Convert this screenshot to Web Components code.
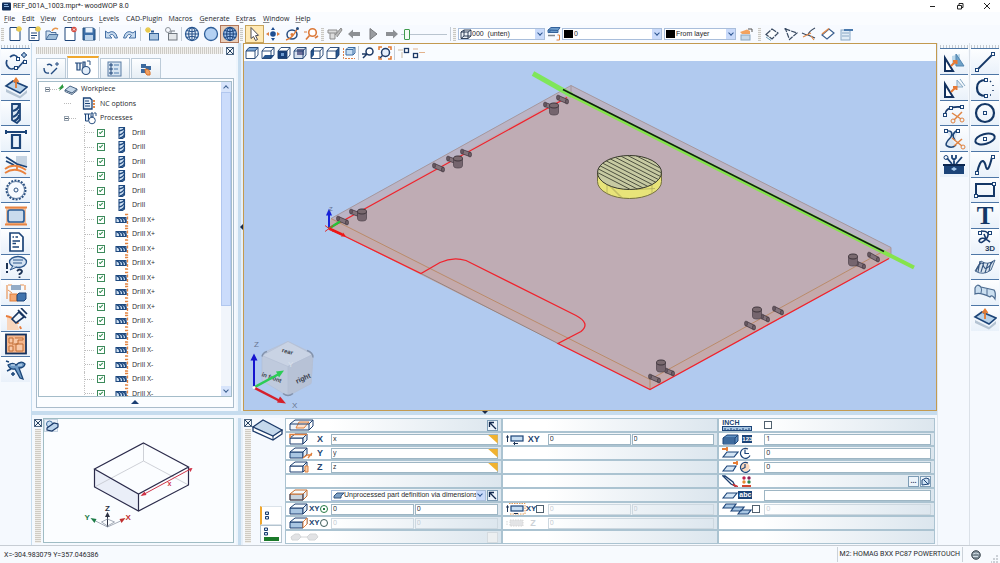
<!DOCTYPE html>
<html lang="en">
<head>
<meta charset="utf-8">
<title>REF_001A_1003.mpr*- woodWOP 8.0</title>
<style>
  html, body { margin: 0; height: 100%; }
  body { font: 7px/12px "Open Sans", "Noto Sans", sans-serif; color: #26282c; background: #f5f9fe; overflow: hidden; }
</style>
</head>
<body>
<wop-app></wop-app>

<script>
const BOX = (top, rest = '') => `<path d="M1 5L4 1.500H13V9L10 12.500H1Z" fill="${top}"/>${rest}<path d="M1 5L4 1.500H13V9L10 12.500H1ZM1 5H10L13 1.500M10 5V12.500" stroke="#1c3f70" stroke-width=".9"/>`;
const SLAB = (fill, stroke) => `<path d="M1 5H14V11H1Z" fill="${fill}" stroke="${stroke}"/><path d="M1 5L6 1H18L14 5Z" fill="#f6fafd" stroke="${stroke}"/><path d="M14 5L18 1V7L14 11Z" fill="#e4edf5" stroke="${stroke}"/>`;
const SHEET = `<path d="M3 1.500H10L13 4.500V14.500H3Z" fill="#fff" stroke="#1c4478"/><path d="M10 1.500V4.500H13" fill="none" stroke="#1c4478"/>`;
const SUN = (x, y) => `<path d="M${x - 3} ${y}H${x + 3}M${x} ${y - 3}V${y + 3}M${x - 2} ${y - 2}L${x + 2} ${y + 2}M${x + 2} ${y - 2}L${x - 2} ${y + 2}" stroke="#e8c94c" stroke-width="1.300"/>`;
const GLOBE = (fill, line) => `<circle cx="8" cy="8" r="6.500" fill="${fill}" stroke="#2f5f9a" stroke-width="1.300"/>${line ? `<path d="M8 1.500V14.500M1.500 8H14.500M2.500 4.500Q8 7 13.500 4.500M2.500 11.500Q8 9 13.500 11.500" stroke="${line}" fill="none"/><ellipse cx="8" cy="8" rx="3.300" ry="6.500" fill="none" stroke="${line}"/>` : ''}`;
const END = (x, y) => `<rect x="${x - 1.500}" y="${y - 1.500}" width="3" height="3" fill="#fff" stroke="#1c4478"/>`;

/* name: [width, height, drawing] */
const ICONS = {
  app: [10, 9, '<rect width="9" height="8" rx="1" y=".5" fill="#12305c"/><path d="M2 2.500H6M2 4.500H7" stroke="#8fb4dd"/>'],
  newDoc: [16, 16, SHEET + SUN(12, 3)],
  newText: [16, 16, SHEET + '<path d="M5 7H11M5 9.500H11M5 12H9" stroke="#1c4478"/>' + SUN(12, 3)],
  open: [16, 16, '<path d="M2 13.500V5H6L7 6.500H12V13.500Z" fill="#cfe0f0" stroke="#4a6f9c"/><path d="M2 13.500L5 8.500H14L12 13.500Z" fill="#9dbcd9" stroke="#4a6f9c"/><path d="M8 5Q10 1 14 3" stroke="#e89850" stroke-width="1.500" fill="none"/>'],
  delDoc: [16, 16, SHEET + '<circle cx="12" cy="3.500" r="2.700" fill="#d6473c"/><path d="M11 2.500L13 4.500M13 2.500L11 4.500" stroke="#fff"/>'],
  save: [16, 16, '<path d="M2 2H12.500L14 3.500V14H2Z" fill="#3c6ea8" stroke="#24507f"/><rect x="4.500" y="2" width="7" height="4.500" fill="#e8f1fa"/><rect x="4" y="9" width="8" height="5" fill="#bcd3ea"/>'],
  undo: [16, 16, '<path d="M2.500 5V12H9L6.500 9.500Q10 6.500 12 12H14.500Q12 2.500 5 7Z" fill="#c5d9ee" stroke="#4570a5"/>'],
  redo: [16, 16, '<path d="M13.500 5V12H7L9.500 9.500Q6 6.500 4 12H1.500Q4 2.500 11 7Z" fill="#c5d9ee" stroke="#4570a5"/>'],
  openNew: [16, 16, '<rect x="5.500" y="7.500" width="9" height="6.500" fill="#a9c6e2" stroke="#2f5f95"/><path d="M7 5.500H10" stroke="#2f5f95" stroke-width="2"/>' + SUN(4, 4)],
  saveGrey: [16, 16, '<rect x="5.500" y="7.500" width="8.500" height="6.500" fill="#e3e6e9" stroke="#70777f"/><path d="M8 7V5H12" stroke="#70777f" fill="none"/><circle cx="5" cy="4" r="2.500" fill="none" stroke="#8c9299"/>'],
  wire: [16, 16, GLOBE('#e6f0fa', '#244f88')],
  solid: [16, 16, GLOBE('#b4d1f3', '')],
  both: [16, 16, GLOBE('#9dc1ec', '#173f78')],
  cursor: [16, 16, '<path d="M5 1.500V12.500L7.500 10.500L9.500 14.500L11.500 13.500L9.500 9.700L12.500 9.300Z" fill="#fff" stroke="#4b4a52"/>'],
  move: [16, 16, '<circle cx="8" cy="8" r="2.800" fill="#1f4f93"/><path d="M8 1L10 4H6ZM8 15L6 12H10Z" fill="#1f4f93"/><path d="M1 8L4 6V10ZM15 8L12 10V6Z" fill="#e08040"/>'],
  orbit: [16, 16, '<ellipse cx="8" cy="8.500" rx="5" ry="4.500" fill="none" stroke="#274d80" stroke-width="1.500"/><path d="M2 14Q9 12 13 3" stroke="#e07b36" stroke-width="1.500" fill="none"/><circle cx="8" cy="8.500" r="1.500" fill="#e07b36"/><circle cx="13.500" cy="2.500" r="1.500" fill="#274d80"/>'],
  zoomO: [16, 16, '<circle cx="9.500" cy="6.500" r="3.800" fill="#fff" stroke="#dc7a3a" stroke-width="1.600"/><path d="M6.500 9.500L3 13.500M12 12L15 10" stroke="#dc7a3a" stroke-width="1.700"/><path d="M1 6H4" stroke="#dc7a3a"/>'],
  mill: [16, 16, '<path d="M1 4H10V7H1ZM3 7V13H8V7" fill="#dcdcdc" stroke="#8b8b8b"/><path d="M8 9L14 2L15 4L10 11" fill="#b8b8b8" stroke="#8b8b8b"/>'],
  left: [16, 16, '<path d="M2 8L7 3.500V6H14V10H7V12.500Z" fill="#8d9094"/>'],
  play: [16, 16, '<path d="M5 2.500L12 8L5 13.500Z" fill="#9a9da1" stroke="#77797c"/>'],
  right: [16, 16, '<path d="M14 8L9 3.500V6H2V10H9V12.500Z" fill="#8d9094"/>'],
  layers: [16, 16, '<path d="M2 4L5 1.500H14L12 4.500ZM2 7L5 4.500M2 4V6.500H12V4.500" fill="#6c9bcb" stroke="#33629b"/><path d="M2 9.500H9" stroke="#7e8790" stroke-width="1.500"/><path d="M11.500 9H13.500V14H10.500" fill="none" stroke="#e0813f"/>'],
  hand: [16, 16, '<path d="M2 6L9 3.500L12 5V8H4Z" fill="#f3a35f"/><rect x="3" y="9" width="9" height="5" fill="#c9d9e8" stroke="#8aa5c0"/><path d="M10 3H14V6" stroke="#555" fill="none"/>'],
  rotRect: [16, 16, '<path d="M2 8.500L8 3L14 7L8 13Z" fill="#fdfefe" stroke="#3a4b62" stroke-width="1.200" stroke-dasharray="6 1"/><path d="M2 11L7 14.500" stroke="#6aa0b8"/>'],
  triang: [16, 16, '<path d="M2.500 3L14 7L6.500 13.500Z" fill="none" stroke="#3a4b62" stroke-width="1.200" stroke-dasharray="5 1"/><circle cx="2.500" cy="3" r="1" fill="#3a4b62"/>'],
  trim: [16, 16, '<path d="M14 2Q8 5 7 9Q5 9 1 7M7 9L14 12" fill="none" stroke="#3a4b62" stroke-width="1.200"/><path d="M2 11L10 7M10 10L13 14" stroke="#e08a4a" stroke-width="1.200"/>'],
  rectO: [16, 16, '<path d="M2 9L9 3L14 7L7 13Z" fill="#fff" stroke="#3a5f90" stroke-width="1.200"/><path d="M2 8L9 2.500" stroke="#e08a4a" stroke-width="1.500"/>'],
  table: [16, 16, '<rect x="2" y="4" width="9" height="10" fill="#e1ecf6" stroke="#8aa8c6"/><path d="M5 3H14V5H5Z" fill="#4a79ad"/><path d="M3 7H10M3 10H10" stroke="#8aa8c6"/>'],
  viewTop: [14, 14, BOX('#fff', '<path d="M1 5L4 1.500H13L10 5Z" fill="#7ea8d6"/>')],
  viewBottom: [14, 14, BOX('#fff', '<path d="M1 12.500L4 9H13L10 12.500Z" fill="#27568f"/>')],
  viewFront: [14, 14, BOX('#fff', '<rect x="1" y="5" width="9" height="7.500" fill="#173f78"/><rect x="4" y="7" width="3" height="3" fill="#6e9bd0"/>')],
  viewBack: [14, 14, BOX('#d5e0ee', '<rect x="4" y="3" width="7" height="6" fill="#6c6f99"/>')],
  viewLeft: [14, 14, BOX('#fff', '<path d="M1 5L4 1.500V9L1 12.500Z" fill="#27568f"/>')],
  viewRight: [14, 14, BOX('#fff', '<path d="M10 5L13 1.500V9L10 12.500Z" fill="#27568f"/>')],
  view3d: [14, 14, '<path d="M4 3.500L6 1.500H13V7L11 9H4ZM4 3.500H11V9M11 3.500L13 1.500" fill="#c4dcf2" stroke="#3d6da3"/><path d="M1.500 2V12.500H13" stroke="#de7f46" stroke-dasharray="2 1" fill="none"/>'],
  zoomIn: [14, 14, '<circle cx="8.500" cy="5.500" r="3.500" fill="#fff" stroke="#1d3a66" stroke-width="1.500"/><path d="M6 8L2 12M1 8H5" stroke="#1d3a66" stroke-width="1.500"/>'],
  zoomFit: [14, 14, '<path d="M1 4V1H4M10 1H13V4M13 10V13H10M4 13H1V10" fill="none" stroke="#e17a35" stroke-width="1.500"/><circle cx="7.500" cy="6.500" r="4" fill="#e4eefa" stroke="#1d3a66" stroke-width="1.500"/><path d="M4.500 9.500L2 12" stroke="#1d3a66" stroke-width="1.500"/>'],
  snapA: [14, 14, '<rect x="7.500" y="2.500" width="4" height="4" fill="#fff" stroke="#1d3a66" stroke-width="1.300"/><path d="M1 4H6M5 6V12" stroke="#c9b9a5"/>'],
  snapB: [14, 14, '<rect x="1.500" y="7.500" width="4" height="4" fill="#fff" stroke="#1d3a66" stroke-width="1.300"/><path d="M7 6.500H13M1 3H6" stroke="#e3b38c"/>'],

  contour: [24, 22, '<path d="M6 6Q11 2 14 7M3 9Q1 14 5 17Q8 19 10 17M13 18L21 9" fill="none" stroke="#234b80" stroke-width="1.700"/><path d="M17 4H23M20 1V7" stroke="#234b80" stroke-width="1.300"/><circle cx="20" cy="4" r="2" fill="#a9c6e2" stroke="#234b80" stroke-width=".8"/>' + END(14, 8) + END(12, 17) + END(21, 11)],
  plateUp: [24, 24, '<path d="M2 13L16 20L23 14V17L16 22.500L2 16Z" fill="#b5c4d3"/><path d="M2 10L9 5L23 11L16 17Z" fill="#b9d3ea" stroke="#1c4478" stroke-width="1.600"/><path d="M12 12V4M9.500 6L12 2.500L14.500 6" stroke="#e57c32" stroke-width="1.800" fill="none"/>'],
  drillBig: [24, 22, '<path d="M8 2H16V18L13 21L8 18Z" fill="#dce9f6" stroke="#1c4478" stroke-width="1.800"/><path d="M9 9Q15 7 15 3M9 15Q15 12 15 8M10 19Q15 17 15 13" stroke="#1c4478" stroke-width="2.200" fill="none"/>'],
  saw: [24, 22, '<path d="M1 4H23M2 2V6M22 2V6" stroke="#1c4478" stroke-width="2"/><path d="M8 7H16V20H8Z" fill="#e9f2fb" stroke="#1c4478" stroke-width="2.200"/>'],
  bend: [24, 20, '<rect x="12" y="1" width="11" height="10" fill="#c5d3e2"/><path d="M2 2L13 9L23 12M2 6L10 10" stroke="#1c4478" stroke-width="1.800" fill="none"/><path d="M1 14Q10 7 22 15M1 18Q11 11 22 19M13 11V15" stroke="#e9823e" stroke-width="1.800" fill="none"/>'],
  gear: [24, 22, '<circle cx="12" cy="11" r="9.500" fill="none" stroke="#2d5282" stroke-width="2" stroke-dasharray="2 1.300"/><circle cx="12" cy="11" r="8.500" fill="#f8fbff" stroke="#2d5282" stroke-width=".7"/><circle cx="12" cy="11" r="2" fill="none" stroke="#2d5282"/>'],
  pocket: [24, 22, '<rect x="2" y="2" width="20" height="18" fill="#f5c09b"/><path d="M1 2.500H23M1 19.500H23" stroke="#e88443" stroke-width="2"/><rect x="4" y="5" width="16" height="12" rx="2" fill="#cadbed" stroke="#2d5f98" stroke-width="1.700"/>'],
  ncDoc: [24, 22, '<path d="M6 2H15L19 6V20H6Z" fill="#fff" stroke="#1c4478" stroke-width="1.700"/><path d="M8.500 6H10M11.500 6H14M8.500 10H16M8.500 12.500H12M8.500 16H15" stroke="#1c4478" stroke-width="1.500"/>'],
  talk: [24, 24, '<ellipse cx="14" cy="7" rx="8.500" ry="5.500" fill="#d3e2f2" stroke="#2b568c" stroke-width="1.300"/><path d="M9 11L6 15L13 12" fill="#d3e2f2" stroke="#2b568c"/><path d="M9 5H19M9 8H18" stroke="#2b568c"/><path d="M3 8V14M3 16V18" stroke="#1c3355" stroke-width="2"/><path d="M13 16Q16 13 18 16Q18 18 15.500 19V20M15.500 21.500V23" stroke="#1c3355" stroke-width="1.800" fill="none"/>'],
  blocks: [24, 22, '<path d="M4 3H8M16 3H20M3 3V17M21 3V8" stroke="#e89558" stroke-width="1.200" fill="none"/><rect x="7" y="3" width="10" height="5" fill="#93abc6"/><rect x="6" y="12" width="7" height="7" fill="#f3a873" stroke="#e17f3b"/><path d="M13 13L15 11H22V17L20 19H13Z" fill="#3f73ad" stroke="#1c4478"/><path d="M4 8L8 11" stroke="#e89558"/>'],
  probe: [24, 22, '<path d="M3 9Q12 11 15 21V22H3Z" fill="#f8d6bd"/><path d="M2 8Q13 10 17 21" stroke="#e87d3c" stroke-width="2" stroke-dasharray="6 3" fill="none"/><path d="M8 11L15 4L20 9L12 15Z" fill="#eef5fc" stroke="#16335f" stroke-width="1.700"/><path d="M14 2L22 10M17 0L23 6" stroke="#16335f" stroke-width="1.700"/>'],
  nest: [24, 22, '<rect x="2" y="1.500" width="20" height="19" fill="#f4b68c" stroke="#16335f" stroke-width="1.800"/><path d="M5 5H9V10H5ZM11 5H19V7H14V11H8M12 11H19V18H12ZM5 13H9V18H5Z" fill="#f8c9a8" stroke="#c06c34" stroke-width="1"/>'],
  wizard: [24, 22, '<path d="M4 6Q9 3 12 6Q17 1 21 5Q20 9 15 9L19 20L16 19L11 10Q6 11 4 6Z" fill="#6f9bc6" stroke="#1b4679" stroke-width="1.300"/><path d="M7 6H11M14 6H18" stroke="#d9eafa"/><path d="M2 2L5 3M3 12L7 10M7 15H11M9 13V17" stroke="#1b4679" stroke-width="1.500"/>'],

  mirrorA: [24, 22, '<path d="M10 5L18 3V14H10Z" fill="#bcd8ea"/><path d="M14 3L22 15H14Z" fill="#6fa2c8" stroke="#5285b0"/><path d="M3 7V20H11Z" fill="#fff" stroke="#12315f" stroke-width="2"/><path d="M9 15L14 10M11 10H14.500V13" stroke="#e87a35" stroke-width="2" fill="none"/>'],
  mirrorB: [24, 22, '<path d="M15 3L21 10H15ZM18 2L23 9" fill="#d9e6f0" stroke="#87a9c4"/><path d="M3 7V20H11Z" fill="#fff" stroke="#12315f" stroke-width="2"/><path d="M9 15L14 10M11 10H14.500V13" stroke="#e87a35" stroke-width="2" fill="none"/>'],
  cutA: [24, 22, '<path d="M3 12Q4 4 19 5" fill="none" stroke="#16386a" stroke-width="1.800"/>' + END(3, 13) + END(9, 6) + END(20, 5) + '<path d="M10 11L19 17M20 10L12 18" stroke="#e08443" stroke-width="1.500"/><circle cx="20" cy="18" r="2" fill="none" stroke="#e08443"/><circle cx="11" cy="19" r="2" fill="none" stroke="#e08443"/>'],
  cutB: [24, 22, '<path d="M4 3Q12 2 9 9Q2 16 5 18Q10 21 14 17M16 2Q8 6 13 12" fill="#dbe7f3" stroke="#1f4779" stroke-width="1.500"/><path d="M10 10L20 18M20 11L12 18" stroke="#e08443" stroke-width="1.500"/><circle cx="21" cy="19" r="2" fill="none" stroke="#e08443"/>' + END(4, 3) + END(16, 3)],
  toolbox: [24, 22, '<path d="M2 10H22V20H2Z" fill="#1c4478"/><path d="M1 11H23" stroke="#0c2750" stroke-width="2"/><path d="M5 4L10 10M20 3L14 10M12 5V10M10 1V4L12 6L14 4V1" stroke="#1c4478" stroke-width="1.800"/><circle cx="4" cy="3.500" r="2" fill="none" stroke="#1c4478"/><path d="M12 13L15 15L12 17L9 15Z" fill="#a8cbee"/>'],
  line: [24, 22, '<path d="M4 19L20 3" stroke="#143766" stroke-width="1.800"/>' + END(4, 19) + END(20, 3)],
  arc: [24, 22, '<path d="M13 3Q4 3 4 11Q4 19 13 19" fill="none" stroke="#143766" stroke-width="2.200"/><path d="M17 4L18 5M20 8V9M20 13V14M18 18L17 18" stroke="#143766" stroke-width="1.500"/>' + END(13, 3) + END(13, 19)],
  circle: [24, 22, '<circle cx="12" cy="11" r="9" fill="none" stroke="#143766" stroke-width="2.200"/>' + END(12, 11)],
  ellipse: [24, 22, '<ellipse cx="12" cy="11" rx="10" ry="5" transform="rotate(-15 12 11)" fill="none" stroke="#143766" stroke-width="2"/>' + END(12, 11)],
  spline: [24, 22, '<path d="M4 19Q7 6 10 7Q12 8 13 13Q15 20 19 3" fill="none" stroke="#143766" stroke-width="2"/>' + END(4, 19) + END(20, 3)],
  rect: [24, 22, '<rect x="3" y="5" width="18" height="12" fill="none" stroke="#143766" stroke-width="2"/>' + END(21, 5) + END(3, 17)],
  curve3d: [24, 14, '<path d="M8 1Q18 1 14 8Q8 15 6 11Q8 5 17 12M11 4L13 9" fill="none" stroke="#16386a" stroke-width="1.600"/>' + END(7, 3) + END(17, 3)],
  mesh: [24, 22, '<path d="M2 15L8 5Q14 10 22 4L18 14Q10 20 2 15Z" fill="#dbe5ef" stroke="#4c6b90"/><path d="M3 15Q8 4 10 8Q12 18 20 5M7 5L5 16M11 6L8 16M15 7L12 17M18 6L16 15" fill="none" stroke="#35557f" stroke-width="1.100"/>'],
  surface: [24, 22, '<path d="M2 12V6Q4 1 8 5L21 8Q23 10 22 17Q19 12 17 15Q7 10 2 12Z" fill="#cbdff0" stroke="#4c6b90" stroke-width="1.200"/><path d="M8 5Q9 8 8 11M14 7V13" fill="none" stroke="#4c6b90"/>'],

  tabContour: [18, 16, '<path d="M5 4Q8 2 10 5M2 7Q2 13 7 12M9 13L15 7" fill="none" stroke="#234b80" stroke-width="1.400"/><path d="M13 3H17M15 1V5" stroke="#234b80"/>'],
  tabProc: [18, 16, '<path d="M1 3H8M3 3V10H6V3M9 2H11V8H9Z" fill="#e3eefa" stroke="#1c4478" stroke-width="1.200"/><circle cx="12" cy="10.500" r="4" fill="#e3eefa" stroke="#2d5282" stroke-width="1.200"/><path d="M13 1H16V5" fill="none" stroke="#2d5282"/>'],
  tabList: [18, 16, '<rect x="2" y="1" width="13" height="14" fill="#d8e5f2" stroke="#5b7da4"/><path d="M4 3H6V5H4ZM4 7H6V9H4ZM4 11H6V13H4Z" fill="none" stroke="#1c4478"/><path d="M8 4H13M8 8H12M8 12H13" stroke="#4f7cae"/>'],
  tabClamp: [18, 16, '<path d="M4 3H9V7H4ZM9 5H14V9H9ZM4 8H9V12H4Z" fill="#3d6a9e"/><path d="M8 8Q14 8 13 14H10Q8 13 8 8Z" fill="#f1a163" stroke="#d8732b"/>'],

  workpiece: [22, 12, '<path d="M2 8L5 2L7 4Z" fill="#238234"/><path d="M1 6L6 1V5Z" fill="#2d9b3f"/><path d="M8 7V8.500L15 11.500L20 7.500V6L15 10Z" fill="#fff" stroke="#4b6685"/><path d="M8 7L13 3L20 6L15 10Z" fill="#c5d7e8" stroke="#4b6685"/>'],
  nc: [14, 13, '<path d="M1.500 1H8L10 3V12H1.500Z" fill="#e7f0f9" stroke="#1c4478" stroke-width="1.300"/><path d="M3 4H7M3 6.500H8M3 9H8" stroke="#1c4478"/><path d="M12 3V11" stroke="#e38b4c" stroke-width="2" stroke-dasharray="2 1"/>'],
  procs: [14, 13, '<path d="M1 2H7M2.500 2V9H5.500V2M8 1H10V5H8Z" fill="#e3eefa" stroke="#1c4478"/><circle cx="9" cy="8.500" r="3.300" fill="#fff" stroke="#2d5282"/><path d="M11 1H13V4" fill="none" stroke="#2d5282"/>'],
  drill: [14, 14, '<path d="M4 1.500H9.500V11L7.500 12.500H4Z" fill="#d3e3f3" stroke="#1f4a80" stroke-width="1.100"/><path d="M4 5Q9 4 9 2M4 9Q9 7.500 9.500 4.500M5 12Q9 11 9.500 8" stroke="#1f4a80" stroke-width="1.500" fill="none"/>'],
  drillX: [14, 14, '<path d="M1 4.500H11V9.500H1Z" fill="#d3e3f3" stroke="#1f4a80" stroke-width="1.100"/><path d="M1.500 5Q5 5 5 9.500M5 5Q8 5 8 9.500M8 5Q10.500 5 11 9.500" stroke="#1f4a80" stroke-width="1.700" fill="none"/><path d="M10 1.500H12.500V13H10" fill="none" stroke="#e3833f" stroke-width="1.300" stroke-dasharray="3 1.500"/>'],

  plate: [34, 24, '<path d="M2 9V13L22 22L31 16V12Z" fill="#fff" stroke="#1b3a69" stroke-width="1.300"/><path d="M2 9L12 2L31 12L22 18Z" fill="#c5d9ec" stroke="#1b3a69" stroke-width="1.300"/><path d="M22 18V22" stroke="#1b3a69"/>'],
  cornerPlate: [14, 12, '<circle cx="4.500" cy="4" r="3" fill="#c8def2" stroke="#44709f"/><path d="M2 8L9 3L13 4V7L7 11L2 10Z" fill="#bcd4ec" stroke="#1b3a69" stroke-width="1.200"/>'],
  slabHole: [26, 12, '<path d="M1 5L6 1H24L20 5V11H1Z" fill="#edf3f9" stroke="#1c3f70"/><path d="M7 9L10 3H20L15 9Z" fill="#fbe0cc" stroke="#e0813f"/><path d="M1 5H20M20 11L24 7V1" stroke="#1c3f70"/>'],
  slabX: [26, 12, SLAB('#fff', '#1c3f70') + '<path d="M1 5V1.500H18" stroke="#e0813f" stroke-width="1.500" fill="none"/>'],
  slabY: [26, 12, SLAB('#a9c6e2', '#1c3f70') + '<path d="M14 11L18 8H23M19 11L23 6" stroke="#e0813f" stroke-width="1.300" fill="none"/>'],
  slabZ: [26, 12, SLAB('#fff', '#1c3f70') + '<path d="M16 5H19V11H16Z" stroke="#e0813f" fill="#f6c9a5"/>'],
  slabO: [26, 12, SLAB('#c8d3de', '#c86c2c') + '<path d="M1 5V11H14V5" stroke="#1c3f70" fill="none"/>'],
  slabL: [20, 12, SLAB('#a9c6e2', '#1c3f70')],
  slabR: [20, 12, SLAB('#a9c6e2', '#1c3f70') + '<path d="M14 5L18 1V7L14 11Z" stroke="#e0813f" fill="#fff"/>'],
  faded: [30, 10, '<path d="M2 5L6 2H10L12 5L9 8H3ZM12 5H18M18 5L21 2H27L29 5L26 8H20Z" fill="#e2e3e5" stroke="#d4d6d8"/>'],
  selPart: [12, 8, '<path d="M1 5L4 2H11L8 5V7H1Z" fill="#7d9fc4" stroke="#33557f"/>'],
  selBox: [12, 10, '<path d="M1 3L4 1H11V7L8 9.500H1ZM1 3H8V9.500M8 3L11 1M4 1V7H11M4 7L1 9.500" fill="#eef3f8" stroke="#1d2f4a" stroke-width=".9"/>'],
  offset: [20, 12, '<rect x="5" y="3" width="12" height="5" fill="#c8def2" stroke="#1c4478" stroke-width="1.200"/><path d="M1.500 9V3M.5 4.500L1.500 2.500L2.500 4.500M8 10.500H12M9 9L7.500 10.500L9 12" stroke="#1c3355" fill="none"/>'],
  offsetDot: [20, 12, '<path d="M3 .5H19V11H3" fill="none" stroke="#e39a55" stroke-dasharray="1.500 1"/><rect x="5" y="3" width="12" height="5" fill="#c8def2" stroke="#1c4478" stroke-width="1.200"/><path d="M1.500 9V3M.5 4.500L1.500 2.500L2.500 4.500M8 10.500H12" stroke="#1c3355" fill="none"/>'],
  offsetOff: [20, 12, '<path d="M1 4V9M4 3H17V9H4Z" fill="#e3e4e6" stroke="#d5d5d5" stroke-dasharray="1.500 1"/>'],
  ruler: [30, 5, '<rect x=".5" y=".5" width="29" height="4" fill="#a9c6e2" stroke="#1c4478"/><path d="M3 4V2M6 4V3M9 4V2M12 4V3M15 4V2M18 4V3M21 4V2M24 4V3M27 4V2" stroke="#1c4478"/>'],
  stack: [18, 11, '<path d="M1 4L5 1H16L13 4V10H1ZM1 4H13L16 1V7L13 10" fill="#5e90c2" stroke="#1c4478"/><path d="M1 6H13M1 8H13" stroke="#1c4478"/>'],
  flat: [16, 10, '<path d="M1 8L5 3H15L11 8Z" fill="#d3e4f4" stroke="#1c4478" stroke-width="1.200"/>'],
  flatIn: [17, 12, '<path d="M1 10L5 5H16L12 10Z" fill="#d3e4f4" stroke="#1c4478" stroke-width="1.200"/><path d="M0 2H6M5 0V4" stroke="#e87d35" stroke-width="1.800"/>'],
  flatOut: [17, 12, '<path d="M1 10L5 5H14L11 10Z" fill="#d3e4f4" stroke="#1c4478" stroke-width="1.200"/><path d="M11 2H16M15 0V4" stroke="#e87d35" stroke-width="1.800"/>'],
  clock: [12, 12, '<path d="M11 8.500A5 5 0 1 1 9 2M6 2.500V6.500L10 6.500" fill="none" stroke="#1c4478" stroke-width="1.200"/>'],
  clockO: [12, 12, '<circle cx="6" cy="6" r="4.500" fill="#fbd9bf"/><path d="M11 8.500A5 5 0 1 1 9 2M6 3V6.500L3 8" fill="none" stroke="#1c4478" stroke-width="1.200"/>'],
  brush: [19, 12, '<path d="M1 1L9 9L13 11L11 7L3 1Z" fill="#fff" stroke="#1c3f70" stroke-width="1.300"/><path d="M11 9L16 11.500L12 11Z" fill="#c33" stroke="#c33"/>'],
  dots: [11, 11, '<g stroke="none"><circle cx="3" cy="2" r="1.700" fill="#c2214c"/><circle cx="8" cy="2" r="1.700" fill="#8c1f52"/><circle cx="3" cy="6" r="1.700" fill="#e58a2e"/><circle cx="8" cy="6" r="1.700" fill="#2c8348"/><path d="M1 9H10V11H1Z" fill="#d4482e"/></g>'],
  sheets: [30, 12, '<path d="M1 5L4 1H14L11 5ZM9 8L12 4H22L19 8ZM16 11L19 7H29L26 11Z" fill="#a9c6e2" stroke="#1c4478" stroke-width="1.200"/>'],
  pick: [9, 9, '<path d="M1 8V3L5 1L8 2V7Z" fill="#cfe2f4" stroke="#1c4478"/><path d="M3 3L7 7" stroke="#1c4478"/>'],
  nw: [9, 9, '<path d="M8 8L2 2M1.500 6V1.500H6" stroke="#12294e" stroke-width="1.300" fill="none"/>'],
  pair: [5, 9, '<path d="M.5 1H3.500V3.500H.5ZM.5 5.500H3.500V8H.5Z" fill="#cfe2f4" stroke="#1c3f70"/>'],
  min: [8, 8, '<path d="M1 4.500H6" stroke="#222"/>'],
  max: [8, 8, '<path d="M1.500 3.500H5.500V7H1.500ZM3 3V1.500H7V5.500H6" stroke="#222" fill="none"/>'],
  close: [8, 8, '<path d="M1 1L7 7M7 1L1 7" stroke="#222"/>'],
  world: [10, 10, '<circle cx="5" cy="5" r="4.300" fill="#7d8c96" stroke="#3f4a52"/><path d="M2 4Q5 2 8 4M2 6.500H7" stroke="#d2dde4" fill="none"/>'],
  sizer: [8, 8, '<path d="M6 0V2M3 3V5M6 3V5M0 6V8M3 6V8M6 6V8" stroke="#bfc4ca" stroke-width="1.500"/>'],
};

const BASE = `
  :host { display: block; box-sizing: border-box; }
  *, *::before, *::after { box-sizing: border-box; }
  button, input, select { font: inherit; color: inherit; margin: 0; padding: 0; }
  button { border: 0; background: none; display: flex; align-items: center; justify-content: center; }
  ul { list-style: none; margin: 0; padding: 0; }`;

class Piece extends HTMLElement {
  css() { return ''; }
  html() { return '<slot></slot>'; }
  connectedCallback() {
    if (this.shadowRoot) return;
    this.attachShadow({ mode: 'open' }).innerHTML = `<style>${BASE}${this.css()}</style>${this.html()}`;
  }
}
const define = (name, css, html) => customElements.define(name, class extends Piece {
  css() { return css; }
  html() { return typeof html === 'function' ? html(this) : (html || '<slot></slot>'); }
});

/* <wop-icon name> draws one glyph of the library at its own size */
define('wop-icon', `:host { display: inline-block; flex: none; line-height: 0; } svg { display: block; }`, el => {
  const [w, h, body] = ICONS[el.getAttribute('name')];
  return `<svg width="${w}" height="${h}" viewBox="0 0 ${w} ${h}" fill="none" aria-hidden="true">${body}</svg>`;
});

define('title-bar', `
  :host { display: flex; align-items: center; height: 12px; padding-left: 2px; background: #fff; flex: none; font-family: Roboto, sans-serif; }
  span { margin-left: 1px; flex: 1; }
  button { width: 27px; height: 12px; }`,
  `<wop-icon name="app"></wop-icon><span><slot></slot></span>
   <button aria-label="Minimize"><wop-icon name="min"></wop-icon></button>
   <button aria-label="Restore"><wop-icon name="max"></wop-icon></button>
   <button aria-label="Close"><wop-icon name="close"></wop-icon></button>`);

define('menu-bar', `
  :host { height: 13px; flex: none; background: #fafcff; }
  ul { display: flex; padding-left: 4px; }
  li { margin-right: 7px; }
  li:nth-child(even) { margin-right: 6px; }
  button { height: 13px; display: block; }
  u { text-underline-offset: 1px; text-decoration-thickness: 1px; text-decoration-color: #8a8c90; }`,
  `<ul>${['<u>F</u>ile', '<u>E</u>dit', '<u>V</u>iew', 'C<u>o</u>ntours', '<u>L</u>evels', 'CAD-Plugin', 'Macros', '<u>G</u>enerate', 'E<u>x</u>tras', '<u>W</u>indow', '<u>H</u>elp']
    .map(t => `<li><button>${t}</button></li>`).join('')}</ul>`);

/* a run of equally spaced tool buttons; "on" and "sel" mark the pressed ones */
define('tool-group', `
  :host { display: flex; align-items: center; flex: none; height: 100%; }
  button { flex: 1; height: 100%; }
  .on { background: #ffe9b5; outline: 1px solid #c8a45c; outline-offset: -1px; }
  .sel { background: #e8cdb8; outline: 1px solid #b0775a; outline-offset: -1px; }`,
  el => el.getAttribute('icons').split(' ').map(i => {
    const [name, cls] = i.split('.');
    return `<button aria-label="${name}"${cls ? ` class="${cls}"` : ''}><wop-icon name="${name}"></wop-icon></button>`;
  }).join(''));

define('tool-sep', `:host { flex: none; width: 1px; height: 14px; margin: 0 1px; background: #c3ccd6; }`, ' ');
define('tool-grip', `:host { flex: none; width: 3px; height: 13px; background: repeating-linear-gradient(#c9c8c4 0 1px, #f3f3f1 1px 2px); }`, ' ');

/* --pad: where the value starts, right of the slotted mark */
define('drop-down', `
  :host { position: relative; display: flex; align-items: center; background: #fff; border: 1px solid #a9bedb; height: 12px; font-family: "Liberation Sans", sans-serif; }
  select { appearance: none; border: 0; background: none; width: 100%; height: 10px; line-height: 10px; padding-left: var(--pad, 11px); outline: 0; }
  .mark { position: absolute; left: 1px; pointer-events: none; display: flex; }
  .arrow { position: absolute; right: 0; top: 0; bottom: 0; width: 9px; background: #c9dafa; pointer-events: none; display: grid; place-items: center; }
  .arrow::after { content: ""; width: 4px; height: 4px; border: solid #2c5590; border-width: 0 1px 1px 0; transform: translateY(-1px) rotate(45deg); }`,
  el => `<select aria-label="${el.getAttribute('label')}"><option>${el.getAttribute('value')}</option></select><span class="mark"><slot></slot></span><span class="arrow"></span>`);

define('main-toolbar', `
  :host { display: flex; align-items: center; height: 18px; flex: none; background: #f7faff; }
  input { appearance: none; width: 46px; height: 14px; background: linear-gradient(#b9c4cf, #b9c4cf) center / 100% 1px no-repeat; margin-right: 2px; }
  input::-webkit-slider-thumb { appearance: none; width: 6px; height: 11px; border: 1px solid #3f9b4d; background: #f4fbf4; border-radius: 1px; }
  .chip { width: 9px; height: 8px; background: #000; }
  .file { width: 92px; } .w2 { width: 38px; } .w3 { width: 56px; } .w4 { width: 75px; } .w1 { width: 17px; } .w5 { width: 93px; }
  tool-grip { margin: 0 2px 0 1px; }
  tool-grip:first-child { margin-left: 0; }
  .level { width: 87px; --pad: 13px; } .layer { width: 100px; margin-right: 2px; } .color { width: 72px; margin-right: 1px; }
  .last { margin-left: 4px; }`,
  `<tool-grip></tool-grip>
   <tool-group class="file" icons="newDoc newText open delDoc save"></tool-group><tool-sep></tool-sep>
   <tool-group class="w2" icons="undo redo"></tool-group><tool-sep></tool-sep>
   <tool-group class="w2" icons="openNew saveGrey"></tool-group><tool-sep></tool-sep>
   <tool-group class="w3" icons="wire solid both.sel"></tool-group><tool-grip></tool-grip>
   <tool-group class="w4" icons="cursor.on move orbit zoomO"></tool-group><tool-grip></tool-grip>
   <tool-group class="w4" icons="mill left play right"></tool-group>
   <input type="range" aria-label="Simulation speed" value="7"><tool-sep></tool-sep><tool-grip></tool-grip>
   <drop-down class="level" label="Level" value="000&nbsp; (unten)"><wop-icon name="selBox"></wop-icon></drop-down>
   <tool-group class="w1" icons="layers"></tool-group>
   <drop-down class="layer" label="Layer" value="0"><div class="chip"></div></drop-down>
   <drop-down class="color" label="Colour" value="From layer"><div class="chip"></div></drop-down>
   <tool-group class="w1" icons="hand"></tool-group><tool-grip class="last"></tool-grip>
   <tool-group class="w5" icons="rotRect triang trim rectO table"></tool-group>`);

/* vertical strip of large tool buttons */
define('tool-column', `
  :host { width: 30px; flex: none; padding: 2px 1px 0; }
  .grip { height: 3px; background: repeating-linear-gradient(90deg, #c6cbd1 0 1px, transparent 1px 3px); }
  li { height: 26px; border-top: 1px solid #4d76a6; background: linear-gradient(#fdfeff, #e9f1fa); }
  li:nth-child(3n) { height: 25px; }
  button { width: 100%; height: 100%; }
  .t { font: bold 25px/24px "Liberation Serif", serif; color: #143766; }
  .d3 { flex-direction: column; } .d3 b { font: bold 8px/9px "Liberation Sans", sans-serif; color: #2a3e5e; padding-left: 10px; }`,
  el => `<div class="grip"></div><ul>${el.getAttribute('icons').split(' ').map(n => n === 'T'
    ? '<li><button class="t">T</button></li>'
    : n === 'curve3d' ? '<li><button class="d3"><wop-icon name="curve3d"></wop-icon><b>3D</b></button></li>'
    : `<li><button aria-label="${n}"><wop-icon name="${n}"></wop-icon></button></li>`).join('')}</ul>`);

define('close-box', `
  :host { flex: none; width: 8px; height: 8px; }
  button { width: 8px; height: 8px; border: 1px solid #4f6884; background: linear-gradient(45deg, transparent 45%, #24405f 45% 58%, transparent 58%), linear-gradient(-45deg, transparent 45%, #24405f 45% 58%, transparent 58%), #eef3f8; }`,
  `<button aria-label="Close panel"></button>`);

define('process-tree', `
  :host { flex: 1; min-height: 0; display: flex; border: 1px solid #a4bcc9; background: #fff; overflow: hidden; }
  ul { flex: 1; }
  li { display: flex; align-items: center; height: 14px; white-space: nowrap; }
  li:nth-child(even) { height: 15px; }
  .l1 { padding-left: 6px; } .l2 { padding-left: 25px; }
  .l3 { padding-left: 7px; margin-left: 45px; border-left: 1px dotted #c3c3c3; gap: 2px; }
  .exp { width: 5px; height: 5px; border: 1px solid #9aa5b1; background: linear-gradient(#52616f, #52616f) center / 3px 1px no-repeat; }
  .dash { width: 7px; height: 1px; background: repeating-linear-gradient(90deg, #bbb 0 1px, transparent 1px 2px); }
  .nc { margin-right: 5px; }
  .l3 .dash { width: 10px; margin-left: -7px; }
  .l1 wop-icon { margin-right: 2px; } .l2 wop-icon { margin: 0 3px 0 7px; }
  .l2 .nc + wop-icon { margin-left: 6px; margin-right: 4px; }
  label { display: flex; align-items: center; }
  input { appearance: none; width: 8px; height: 8px; border: 1px solid #3c8a5b; background: #fff; margin-right: 10px; position: relative; }
  input::before { content: ""; position: absolute; left: 2px; top: 0; width: 2px; height: 4px; border: solid #2b8a4b; border-width: 0 1px 1px 0; transform: rotate(45deg); }
  label wop-icon { margin-right: 3px; }
  .bar { width: 10px; display: flex; flex-direction: column; background: #f1f5fb; }
  .bar i { height: 10px; background: #d7e4fb; display: grid; place-items: center; }
  .bar i::after { content: ""; width: 4px; height: 4px; border: solid #3c5f90; border-width: 1px 0 0 1px; transform: translateY(1px) rotate(45deg); }
  .bar i:last-child::after { transform: translateY(-1px) rotate(225deg); }
  .thumb { height: 214px; background: #cbdcfb; border: 1px solid #b1c7ef; }
  .rest { flex: 1; }`,
  () => {
    const drill = (t, i) => `<li class="l3"><span class="dash"></span><label><input type="checkbox" checked><wop-icon name="${i}"></wop-icon>${t}</label></li>`;
    return `<ul>
      <li class="l1"><span class="exp"></span><span class="dash"></span><wop-icon name="workpiece"></wop-icon>Workpiece</li>
      <li class="l2"><span class="dash nc"></span><wop-icon name="nc"></wop-icon>NC options</li>
      <li class="l2"><span class="exp"></span><span class="dash"></span><wop-icon name="procs"></wop-icon>Processes</li>
      ${drill('Drill', 'drill').repeat(6)}${drill('Drill X+', 'drillX').repeat(7)}${drill('Drill X-', 'drillX').repeat(6)}</ul>
      <div class="bar"><i></i><div class="thumb"></div><div class="rest"></div><i></i></div>`;
  });

define('process-dock', `
  :host { display: flex; flex-direction: column; width: 204px; flex: none; padding: 2px 2px 3px 4px; background: #f5f9fe; }
  .head { display: flex; align-items: center; height: 11px; gap: 3px; }
  .grip { flex: 1; height: 7px; background: repeating-linear-gradient(90deg, #cdcbc6 0 1px, #f2f1ee 1px 2px); }
  .tabs { display: flex; align-items: flex-end; gap: 1px; height: 22px; }
  .tabs button { width: 30px; height: 20px; border: 1px solid #bccbd8; border-bottom: 0; background: linear-gradient(#fdfeff, #e6eef5); }
  .tabs .on { height: 22px; width: 32px; border-top: 2px solid #f0a72d; background: #fff; }
  .body { flex: 1; min-height: 0; display: flex; flex-direction: column; border: 1px solid #a9bccb; padding: 2px 1px 0; background: #fbfdff; }
  .up { height: 10px; display: grid; place-items: center; }
  .up::after { content: ""; border: 4px solid transparent; border-top: 0; border-bottom-color: #1b3f73; }`,
  `<div class="head"><div class="grip"></div><close-box></close-box></div>
   <div class="tabs"><button aria-label="Contours"><wop-icon name="tabContour"></wop-icon></button><button class="on" aria-label="Processes"><wop-icon name="tabProc"></wop-icon></button><button aria-label="Variables"><wop-icon name="tabList"></wop-icon></button><button aria-label="Clamping"><wop-icon name="tabClamp"></wop-icon></button></div>
   <div class="body"><process-tree></process-tree><div class="up"></div></div>`);

const dowel = (x1, y1, x2, y2) => `<path d="M${x1} ${y1}L${x2} ${y2}" stroke="#4f424b" stroke-width="5"/><path d="M${x1} ${y1}L${x2} ${y2}" stroke="#82727a" stroke-width="3.400"/><ellipse cx="${x1}" cy="${y1}" rx="1.500" ry="2.500" fill="#665861" stroke="#4a3f47" stroke-width=".7"/><ellipse cx="${x2}" cy="${y2}" rx="1.500" ry="2.500" fill="#6d5d66" stroke="#3f353c" stroke-width=".7"/>`;
const cup = (x, y) => `<path d="M${x - 4.500} ${y - 4}V${y + 3}A4.500 2.500 0 0 0 ${x + 4.500} ${y + 3}V${y - 4}" fill="#75656e" stroke="#4a3f47" stroke-width=".7"/><ellipse cx="${x}" cy="${y - 4}" rx="4.500" ry="2.500" fill="#79696f" stroke="#3f353c"/>`;
const DOWELS = [[558, 97, 567, 101], [545, 104, 553, 107], [462, 151, 470, 154], [448, 158, 456, 161], [434, 165, 443, 169], [338, 218, 347, 222], [351, 211, 359, 214], [857, 263, 864, 266], [869, 254, 878, 259], [762, 316, 768, 319], [774, 308, 782, 312], [746, 323, 754, 327], [666, 370, 673, 373], [650, 376, 659, 380]];
const CUPS = [[554, 109], [458, 162], [362, 215], [853, 260], [757, 313], [661, 366]];

define('scene-view', `
  :host { flex: 1; min-height: 0; background: #b1caef; }
  svg { display: block; width: 100%; height: 100%; font-family: "Liberation Sans", sans-serif; }`,
  `<svg viewBox="244 61 692 348" fill="none" role="img" aria-label="Workpiece">
    <defs><clipPath id="disc"><ellipse cx="629.500" cy="172" rx="32" ry="17"/></clipPath></defs>
    <path d="M331 218L571 85L891 247V257L650 389L329 228Z" fill="#bfacb4"/>
    <path d="M331 218L571 85L891 247V256L568 94L331 226Z" fill="#bbb4c5"/>
    <path d="M329 228L331 218L650 379V389Z" fill="#c4aaac"/>
    <path d="M650 379L891 247V257L650 389Z" fill="#c4aaac"/>
    <path d="M331 218L571 85L891 247V257M571 85V94" stroke="#a08f93" stroke-width=".8"/>
    <path d="M421 273L558 343" stroke="#96837f"/>
    <path d="M331 218L650 379L881 252M650 379V389" stroke="#b98358" stroke-width=".8"/>
    <path d="M533 73L572 95" stroke="#7fe65a" stroke-width="5"/>
    <path d="M570 94L914 267" stroke="#86e44c" stroke-width="4"/>
    <path d="M563 89L884 251" stroke="#0f1f10" stroke-width="1.600"/>
    <g stroke="#f0222c" stroke-width="1.300">
      <path d="M329 228L567 97M329 228L421 273L440 262Q453 256 466 260L576 315Q591 323 581 331L558 343L650 389L889 258"/>
    </g>
    ${DOWELS.map(d => dowel(...d)).join('')}${CUPS.map(c => cup(...c)).join('')}
    <path d="M597.500 172V181A32 17 0 0 0 661.500 181V172Z" fill="#e8e479" stroke="#74703f"/>
    <path d="M607 184V193M652 184V193M600 176L620 196M612 187L622 197M636 189L655 188" stroke="#aaa65c" stroke-width=".7"/>
    <ellipse cx="629.500" cy="172" rx="32" ry="17" fill="#c7caa2" stroke="#35362a"/>
    <g clip-path="url(#disc)" stroke="#4d5040"><path d="M610 150L680 186M602 150L672 186M594 150L664 186M586 150L656 186M618 150L688 186M626 150L696 186M578 150L648 186M578 154L648 190M578 158L648 194M578 162L648 198"/></g>
    <path d="M329 228V212" stroke="#1722d8" stroke-width="2"/><path d="M329 208L326 215H332Z" fill="#1722d8"/>
    <path d="M329 228L340 221" stroke="#24c437" stroke-width="2.500"/>
    <path d="M329 228L342 234" stroke="#ee1515" stroke-width="2.500"/><path d="M325 225L333 231M325 231L333 225" stroke="#e02a2a"/><path d="M346 236L341 236L343 232Z" fill="#ee1515"/>
    <text x="329" y="210" font-size="6" fill="#5f6c8d">Z</text>

    <g stroke="#b3bfd4" stroke-width=".7"><path d="M288 341L264 352Q262 354 262 357V380L285 394Q288 395 291 394L311 383L313 355Q312 352 309 351Z" fill="#bfcadd"/>
    <path d="M262 355L288 366L313 354L288 341Z" fill="#c9d3e4"/><path d="M288 366L313 354L311 383L288 395Z" fill="#b7c2d6"/></g>
    <path d="M262 356Q263 352 267 351M307 350Q313 352 313 357M283 393Q288 397 293 393" stroke="#8393ad" stroke-width="1.500"/>
    <g font-size="7" fill="#3a3f4c" font-weight="bold" text-anchor="middle"><text transform="translate(287 353) rotate(15)" font-size="6">rear</text><text transform="translate(271 379) rotate(20)" font-size="6">in front</text><text transform="translate(304 380) rotate(-24)">right</text></g>
    <path d="M254 387V358" stroke="#1515cf" stroke-width="2"/><path d="M254 353L250.500 360H257.500Z" fill="#1515cf"/>
    <path d="M254 387L278 374" stroke="#2ccc55" stroke-width="2.500"/><path d="M284 370L276 371L279 377Z" fill="#2ccc55"/>
    <path d="M254 387L279 400" stroke="#d5202c" stroke-width="2.500"/><path d="M286 403L280 396L277 402Z" fill="#d5202c"/>
    <circle cx="254" cy="387" r="1.500" fill="#fff"/>
    <g font-size="8" fill="#69758f"><text x="254" y="346">Z</text><text x="292" y="407">X</text><text x="288" y="366" fill="#dce2ec">Y</text></g>
  </svg>`);

define('work-view', `
  :host { display: flex; flex-direction: column; flex: 1; min-width: 0; border: 1px solid #c39a50; }
  .bar { display: flex; align-items: center; height: 17px; flex: none; background: #f9fcff; }
  .a { width: 113px; } .b { width: 33px; } .c { width: 30px; }`,
  `<div class="bar"><tool-group class="a" icons="viewTop viewBottom viewFront viewBack viewLeft viewRight view3d"></tool-group><tool-sep></tool-sep><tool-group class="b" icons="zoomIn zoomFit"></tool-group><tool-sep></tool-sep><tool-group class="c" icons="snapA snapB"></tool-group></div>
   <scene-view></scene-view>`);

define('side-grip', `
  :host { display: flex; flex-direction: column; align-items: center; gap: 2px; width: 10px; flex: none; padding-top: 1px; }
  .g { flex: 1; width: 6px; background: repeating-linear-gradient(#cfcbc3 0 1px, #f0eeea 1px 2px); }`,
  `<close-box></close-box><div class="g"></div>`);

define('help-preview', `
  :host { display: flex; width: 204px; flex: none; padding: 0 2px 2px 1px; background: #f5f9fe; }
  .box { position: relative; flex: 1; min-width: 0; border: 1px solid #9fbcc4; background: #fbfdff; }
  .badge { position: absolute; left: 0; top: 0; width: 14px; height: 13px; border: 1px solid #c6d4e2; background: #edf3fa; display: grid; place-items: center; }
  svg { display: block; width: 100%; height: 100%; font: bold 8px "Liberation Sans", sans-serif; }`,
  `<side-grip></side-grip><div class="box">
   <svg viewBox="45 418 188 123" fill="none" role="img" aria-label="Unprocessed part">
    <path d="M95 468L139 493V510L95 486Z" fill="#eaeef8"/><path d="M95 486L144 460L189 484M144 442V460" stroke="#c3c5cd" stroke-width=".8"/>
    <path d="M144 442L189 466L139 493L95 468ZM95 468V486L139 510L189 484V466M139 493V510" stroke="#2b2b4b" stroke-width="1.200"/>
    <path d="M143 494L191 468" stroke="#cf3347"/><path d="M141 495L145 490.500L147 494ZM193 467L189 467.500L191 471Z" fill="#cf3347"/>
    <text x="168" y="485" fill="#cf3347" font-size="7">x</text>
    <path d="M108 526V515" stroke="#2c3142"/><path d="M108 511L105.500 516H110.500Z" fill="#2c3142"/>
    <path d="M108 526L96 520M108 526L121 520M102 521L108 518L115 521L108 525Z" stroke="#8d95a4" stroke-width=".8"/>
    <path d="M91 517L97 518L95 522Z" fill="#1d7c47"/><path d="M126 517L120 518L122 522Z" fill="#c22f2f"/>
    <text x="105.500" y="510" fill="#2c3142">Z</text><text x="85" y="519" fill="#1d7c47">Y</text><text x="126" y="519" fill="#c22f2f">X</text>
   </svg><span class="badge"><wop-icon name="cornerPlate"></wop-icon></span></div>`);

/* property sheet: nine aligned rows in three equal columns */
define('property-sheet', `
  :host { display: flex; flex: 1; min-width: 0; padding: 0 2px 2px 0; background: #f5f9fe; }
  .side { width: 32px; flex: none; display: flex; flex-direction: column; align-items: flex-end; padding-right: 3px; }
  .side > wop-icon { align-self: center; margin-bottom: auto; }
  .side button { width: 22px; height: 19px; background: #fff; border: 1px solid #dbe3ea; flex-direction: column; align-items: flex-start; padding-left: 3px; }
  .side .on { border-left: 2px solid #f0a72d; }
  .side .new { height: 18px; border-color: #b4c4cf; }
  .side .new::after { content: ""; width: 15px; height: 4px; background: #1c7a2a; margin-top: 1px; }
  .sheet { flex: 1; min-width: 0; display: grid; grid-template-columns: repeat(3, 1fr); gap: 2px; background: #abc3d1; padding: 1px; align-self: flex-start; }
  .col { display: grid; grid-auto-rows: 12px; gap: 2px; min-width: 0; }
  .row { display: flex; align-items: center; gap: 1px; min-width: 0; padding: 0 3px 0 3px; background: linear-gradient(90deg, #fff 20%, #dce6ee); }
  .row > label, .row > .lead { display: flex; align-items: center; width: 41px; flex: none; white-space: nowrap; }
  b { font: bold 9px/12px "Liberation Sans", sans-serif; color: #23446f; }
  .lab b { margin-left: 2px; } .tight b { font-size: 8px; }
  .row > .ruled { flex-direction: column; align-items: flex-start; }
  .ruled b { font-size: 7px; line-height: 7px; }
  .off b { color: #ccd1d6; }
  .abc { font: bold 7px/8px "Liberation Sans", sans-serif; color: #fff; background: #1c4478; padding: 0 1px; }
  .stack .abc { margin-left: 2px; padding: 0; font-size: 6px; }
  input[type=text] { flex: 1; min-width: 0; width: 0; height: 11px; border: 1px solid #9eb6c4; background: #fff; padding: 0 1px; outline: 0; }
  input[type=text]:disabled { background: transparent; border-color: #cdd8e0; color: #c3cad1; }
  .tri { flex: 1; display: flex; position: relative; }
  .tri::after { content: ""; position: absolute; right: 0; top: 1px; width: 10px; height: 9px; background: #f1b22f; clip-path: polygon(0 0, 100% 0, 100% 100%); pointer-events: none; }
  input[type=radio] { appearance: none; width: 8px; height: 8px; border: 1px solid #3c5c59; border-radius: 50%; background: #fff; flex: none; }
  input[type=radio]:checked { border-color: #267a44; background: radial-gradient(#267a44 30%, #fff 35%); }
  input[type=checkbox] { appearance: none; width: 8px; height: 8px; border: 1px solid #51616f; background: #fff; flex: none; }
  .btn { width: 11px; height: 11px; border: 1px solid #7d9cb5; background: #edf4fb; flex: none; }
  .btn.dim { border-color: #d5dbe0; background: #eceff1; }
  .btn.dots { font-weight: bold; line-height: 6px; color: #1c3355; }
  .gap { flex: 1; }
  drop-down { flex: 1; min-width: 0; height: 11px; --pad: 12px; }`,
  () => {
    let n = 0;
    const I = name => `<wop-icon name="${name}"></wop-icon>`;
    const fld = (v, id, dis, lab) => `<input type="text" value="${v}"${id ? ` id="${id}"` : ''}${lab ? ` aria-label="${lab}"` : ''}${dis ? ' disabled' : ''}>`;
    const row = s => `<div class="row">${s}</div>`;
    const one = (lead, v, cls = 'lab') => { const id = 'f' + n++; return row(`<label class="${cls}" for="${id}">${lead}</label>${fld(v, id)}`); };
    const dim = (ax, v) => { const id = 'f' + n++; return row(`<label class="lab" for="${id}">${I('slab' + ax)}<b>${ax}</b></label><span class="tri">${fld(v, id)}</span>`); };
    const nw = '<button class="btn" aria-label="Take over">' + I('nw') + '</button>';
    return `<side-grip></side-grip>
    <div class="side">${I('plate')}<button class="on" aria-label="Parameters">${I('pair')}</button><button class="new" aria-label="Add parameters">${I('pair')}</button></div>
    <div class="sheet">
      <div class="col">
        ${row(`<span class="lead">${I('slabHole')}</span><span class="gap"></span>${nw}`)}
        ${dim('X', 'x')}${dim('Y', 'y')}${dim('Z', 'z')}${row('')}
        ${row(`<span class="lead">${I('slabO')}</span><drop-down label="Part definition" value="Unprocessed part definition via dimensions">${I('selPart')}</drop-down>${nw}`)}
        ${row(`<label class="tight">${I('slabL')}<b>XY</b><input type="radio" name="o" checked></label>${fld(0, '', 0, 'Offset X')}${fld(0, '', 0, 'Offset Y')}`)}
        ${row(`<label class="tight">${I('slabR')}<b>XY</b><input type="radio" name="o"></label>${fld(0, '', 1, 'Rest X')}${fld(0, '', 1, 'Rest Y')}`)}
        ${row(`<span class="lead">${I('faded')}</span><span class="gap"></span><button class="btn dim" aria-label="Reset" disabled></button>`)}
      </div>
      <div class="col">
        ${row('')}
        ${row(`<label class="lab" for="px">${I('offset')}<b>XY</b></label>${fld(0, 'px')}${fld(0, '', 0, 'Position Y')}`)}
        ${row('').repeat(4)}
        ${row(`<label class="tight">${I('offsetDot')}<b>XY</b><input type="checkbox"></label>${fld(0, '', 1, 'Frame X')}${fld(0, '', 1, 'Frame Y')}`)}
        ${row(`<label class="lab off" for="pz">${I('offsetOff')}<b>&nbsp;Z</b></label>${fld(0, 'pz', 1)}`)}
        ${row('')}
      </div>
      <div class="col">
        ${row(`<label class="ruled" for="inch"><b>INCH</b>${I('ruler')}</label><input type="checkbox" id="inch">`)}
        ${one(I('stack') + '<span class="abc">123</span>', 1, 'stack')}${one(I('flatIn') + I('clock'), 0)}${one(I('flatOut') + I('clockO'), 0)}
        ${row(`<span class="lead">${I('brush')}${I('dots')}</span><span class="gap"></span><button class="btn dots" aria-label="More">...</button><button class="btn" aria-label="Pick">${I('pick')}</button>`)}
        ${one(I('flat') + '<span class="abc">abc</span>', '')}
        ${row(`<label class="tight">${I('sheets')}<input type="checkbox"></label>${fld(0, '', 1, 'Copies')}`)}
        ${row('')}${row('')}
      </div>
    </div>`;
  });

define('status-bar', `
  :host { display: flex; align-items: center; height: 18px; flex: none; border-top: 1px solid #c7cdd4; padding-left: 4px; background: #f7fafe; font-family: Roboto, sans-serif; }
  .g { flex: 1; }
  .m { border: solid #cbd2d9; border-width: 0 1px; padding: 0 2px; line-height: 15px; }
  wop-icon { margin-left: 8px; } .end { margin: 8px 1px 0 10px; }`,
  `<span><slot></slot></span><span class="g"></span><span class="m"><slot name="machine"></slot></span><wop-icon name="world"></wop-icon><wop-icon class="end" name="sizer"></wop-icon>`);

define('wop-app', `
  :host { display: flex; flex-direction: column; height: 100vh; }
  main { flex: 1; min-height: 0; display: flex; }
  .center { flex: 1; min-width: 0; display: flex; flex-direction: column; background: #c6dcee; padding-left: 1px; }
  .top { flex: 1; min-height: 0; display: flex; }
  .vsplit { width: 7px; flex: none; display: flex; align-items: center; justify-content: flex-end; background: linear-gradient(90deg, #eef5fc 2px, #c6dcee 2px 5px, #e6eff9 5px); }
  .top .vsplit::after { content: ""; border: 3px solid transparent; border-right-color: #1b2b4a; border-left: 0; }
  .hsplit { height: 7px; flex: none; display: grid; place-items: start center; background: linear-gradient(#c6dcee 4px, #f2f7fd 4px); }
  .hsplit::after { content: ""; border: 3px solid transparent; border-top-color: #1b2b4a; border-bottom: 0; }
  .bottom { height: 127px; flex: none; display: flex; }
  .right { display: flex; gap: 1px; padding: 0 0 0 1px; border-left: 1px solid #dfe7ef; background: linear-gradient(90deg, transparent 31px, #dbe1e8 31px 32px, transparent 32px); }
  .left { width: 31px; }`,
  `<title-bar>REF_001A_1003.mpr*- woodWOP 8.0</title-bar>
   <menu-bar></menu-bar>
   <main-toolbar></main-toolbar>
   <main>
     <tool-column class="left" icons="contour plateUp drillBig saw bend gear pocket ncDoc talk blocks probe nest wizard"></tool-column>
     <div class="center">
       <div class="top"><process-dock></process-dock><div class="vsplit"></div><work-view></work-view></div>
       <div class="hsplit"></div>
       <div class="bottom"><help-preview></help-preview><div class="vsplit"></div><property-sheet></property-sheet></div>
     </div>
     <div class="right"><tool-column icons="mirrorA mirrorB cutA cutB toolbox"></tool-column><tool-column icons="line arc circle ellipse spline rect T curve3d mesh surface plateUp"></tool-column></div>
   </main>
   <status-bar>X=-304.983079 Y=357.046386<span slot="machine">M2: HOMAG BXX PC87 POWERTOUCH</span></status-bar>`);
</script>
</body>
</html>
